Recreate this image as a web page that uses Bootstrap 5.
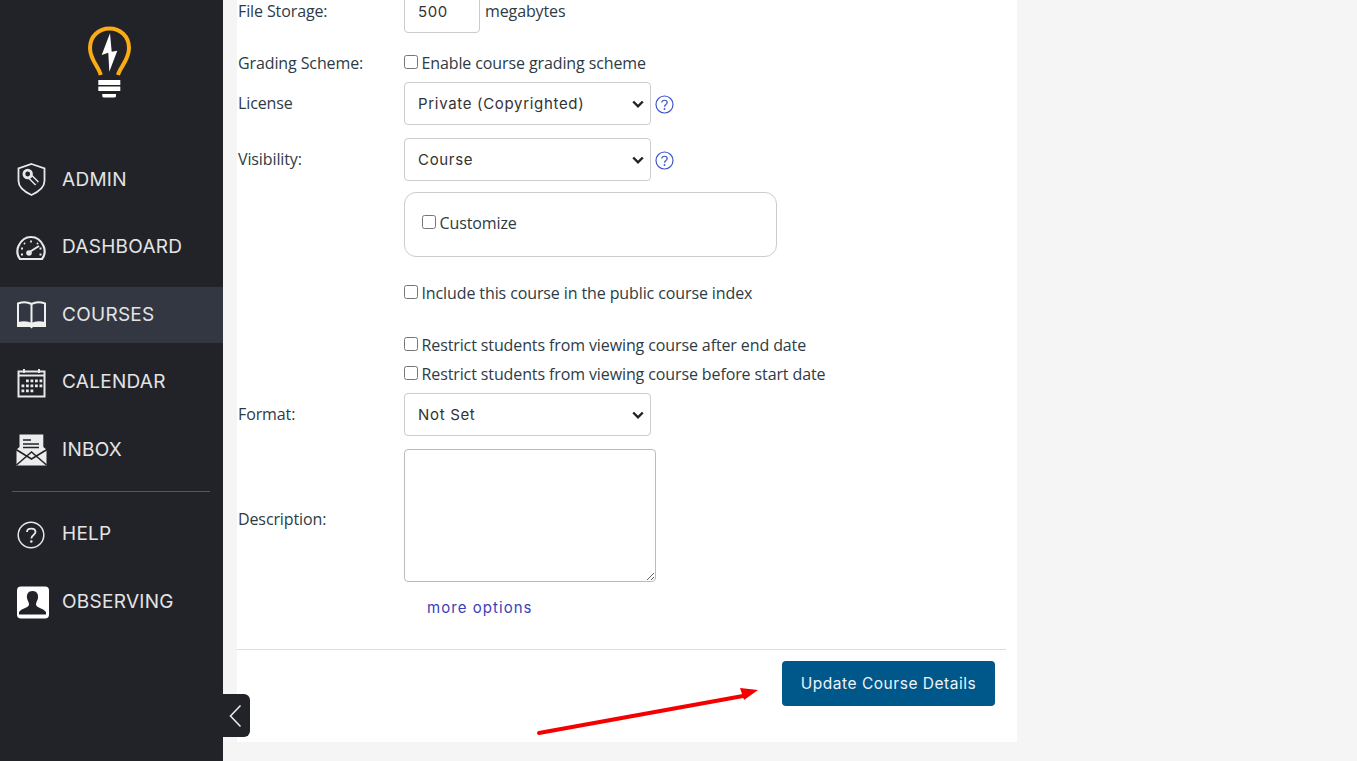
<!DOCTYPE html>
<html lang="en">
<head>
<meta charset="utf-8">
<title>Course details</title>
<link href="https://cdn.jsdelivr.net/npm/bootstrap@5.3.0/dist/css/bootstrap.min.css" rel="stylesheet">
<style>
html,body{height:100%;overflow:hidden}
body{background:#f5f5f5;font-family:"Open Sans","Liberation Sans",sans-serif;font-size:16px;letter-spacing:-.11px;color:#2d3b45}
.app-shell{height:761px}
.side-rail{width:223px;flex:none;background:#212329;padding-top:26px;position:relative}
.logo-wrap{height:126px;padding-right:3px}
.rail-item{height:56px;margin-bottom:11.5px;padding-left:16px;color:#e4e4e4;font-family:Inter,"Noto Sans",sans-serif;font-size:19px;letter-spacing:.28px;text-decoration:none}
.rail-item:hover{color:#fff}
.rail-item.is-current{background:#333741}
.rail-icon{width:46px;flex:none;display:block}
.rail-rule{margin:1px 13px 15px 12px;border-top:1px solid #55575c;opacity:1}
.rail-toggle{position:absolute;left:223px;top:694px;width:27px;height:43px;background:#212329;border-radius:0 6px 6px 0;z-index:3}
.form-panel{width:780px;height:742px;margin-left:14px;background:#fff;padding-right:11px;position:relative;overflow:hidden;flex:none}
.form-row{display:flex;padding-left:1px}
.form-lab{width:166px;flex:none;margin:0;font-size:16px;color:#2d3b45}
.lab-up{margin-top:-2px}
.lab-desc{padding-top:6px}
.num-box{width:76px;height:43px;border:1px solid #ccc;border-radius:4px;padding:0 13px;font-family:Inter,sans-serif;font-size:15px;letter-spacing:.6px;color:#333;background:#fff}
.unit-text{margin:-2px 0 0 5px}
.sel-box{width:247px;height:43px;border-color:#ccc;border-radius:4px;padding:1px 36px 0 13px;font-family:Inter,sans-serif;font-size:15px;letter-spacing:.68px;color:#333;background-image:url("data:image/svg+xml,%3csvg xmlns='http://www.w3.org/2000/svg' viewBox='0 0 12 10'%3e%3cpath fill='none' stroke='%23222' stroke-width='2.400' d='M1.200 2.500 6 7.300 10.800 2.500'/%3e%3c/svg%3e");background-size:12px 10px;background-position:right 6px center}
.chk{width:13.500px;height:13.500px;margin:-2px 4px 0 0;flex:none;appearance:none;background:#fff;border:1px solid #767676;border-radius:2.500px}
.chk-line{display:flex;align-items:center;margin:0;height:24px;color:#2d3b45}
.qmark{width:19px;height:19px;margin:2px 0 0 4px;flex:none}
.cust-box{width:373px;height:65px;border:1px solid #ccc;border-radius:12px;padding:18px 17px}
.desc-box{width:252px;height:133px;border:1px solid #bbb;border-radius:4px;display:block}
.more-link{margin-left:23px;font-family:Inter,sans-serif;font-size:15px;letter-spacing:1.05px;color:#3b3fb8;text-decoration:none}
.panel-rule{margin:29px 0 0;border-top:1px solid #ddd;opacity:1}
.save-btn{width:213px;height:45px;background:#00578a;border:0;border-radius:4px;color:#eef3f7;font-family:Inter,sans-serif;font-size:15.500px;letter-spacing:.53px;padding:2px 0 0}
.save-btn:hover{background:#00578a;color:#fff}
.note-arrow{position:absolute;left:0;top:0;width:780px;height:742px;pointer-events:none}
.gap-r1{margin-top:-10px}
.gap-r2{margin-top:18px}
.gap-r3{margin-top:7px}
.gap-r4{margin-top:13px}
.gap-r5{margin-top:11px}
.gap-r6{margin-top:24px}
.gap-r7{margin-top:28px}
.gap-r8{margin-top:5px}
.gap-r9{margin-top:7px}
.gap-r10{margin-top:13px}
.gap-r11{margin-top:15px}
.btn-row{margin-top:11px;padding-right:11px}
</style>
</head>
<body>
<div class="app-shell d-flex">
  <nav class="side-rail d-flex flex-column">
    <div class="logo-wrap d-flex justify-content-center">
      <svg width="46" height="73" viewBox="0 0 46 73" aria-label="logo">
        <path d="M13.700 49 C12 41 3 34 3 22 C3 10 12 2.500 22.500 2.500 C33 2.500 42 10 42 22 C42 34 33 41 31 49" fill="none" stroke="#fbab13" stroke-width="4"/>
        <path d="M23 7.300 L14.700 29 L21.300 26.700 L22.300 45.700 L30.300 24.700 L24.700 25.700 Z" fill="#fff"/>
        <rect x="11.300" y="54" width="22" height="5" fill="#fff"/>
        <rect x="11.300" y="60.500" width="22" height="4.500" fill="#fff"/>
        <path d="M15.300 68 H29 V70 Q29 71.500 27 71.500 H17 Q15.300 71.500 15.300 70 Z" fill="#fff"/>
      </svg>
    </div>
    <a class="rail-item d-flex align-items-center" href="#">
      <svg class="rail-icon" height="34" viewBox="0 0 46 34"><path d="M15.500 1 L28.500 5.500 V18 C28.500 24 22 29 15.500 32 C9 29 2.500 24 2.500 18 V5.500 Z" fill="none" stroke="#e8e8e8" stroke-width="1.800"/><path d="M14.500 14 L21 20.500" stroke="#e8e8e8" stroke-width="5.500"/><path d="M14.500 14 L21 20.500" stroke="#212329" stroke-width="2.500"/><circle cx="11.700" cy="11" r="5.200" fill="#e8e8e8"/><circle cx="11.700" cy="11" r="2.400" fill="#212329"/></svg>
      <span>ADMIN</span>
    </a>
    <a class="rail-item d-flex align-items-center" href="#">
      <svg class="rail-icon" height="26" viewBox="0 0 46 26"><path d="M4 24 C0.500 20 1 14 2.500 11 C5 5.500 9.500 2 15 2 C20.500 2 25 5.500 27.500 11 C29 14 29.500 20 26 24 Z" fill="none" stroke="#e8e8e8" stroke-width="2.200"/><path d="M12 18 L23 11" stroke="#e8e8e8" stroke-width="2"/><circle cx="13" cy="18" r="2.800" fill="#e8e8e8"/><path d="M15 5.500v2M8 8l1 1M22 8l-1 1M5 13.500h2M23.500 13.500h2M5 19.500h2M23.500 19.500h2" stroke="#e8e8e8" stroke-width="1.800"/></svg>
      <span>DASHBOARD</span>
    </a>
    <a class="rail-item is-current d-flex align-items-center" href="#">
      <svg class="rail-icon" height="28" viewBox="0 0 46 28"><path d="M2 2.500 C7 0.800 12 1.200 15.500 3 C19 1.200 24 0.800 29 2.500 V22 C24 21 19 21 15.500 23 C12 21 7 21 2 22 Z M15.500 3 V23" fill="none" stroke="#f0f0f0" stroke-width="2"/><path d="M1 22 H30 V26 H17 L15.500 27.500 L14 26 H1 Z" fill="#f0f0f0"/></svg>
      <span>COURSES</span>
    </a>
    <a class="rail-item d-flex align-items-center" href="#">
      <svg class="rail-icon" height="30" viewBox="0 0 46 30"><path d="M2.500 3.500 H28.500 V28.500 H2.500 Z" fill="none" stroke="#e8e8e8" stroke-width="2"/><path d="M2 7.500 H29" stroke="#e8e8e8" stroke-width="2"/><path d="M8 1v4M23 1v4" stroke="#e8e8e8" stroke-width="2"/><path d="M10 11.500h2.800v2.800h-2.800zM14.500 11.500h2.800v2.800h-2.800zM19 11.500h2.800v2.800h-2.800zM23.500 11.500h2.800v2.800h-2.800zM5.500 16.500h2.800v2.800h-2.800zM10 16.500h2.800v2.800h-2.800zM14.500 16.500h2.800v2.800h-2.800zM19 16.500h2.800v2.800h-2.800zM23.500 16.500h2.800v2.800h-2.800zM5.500 21.500h2.800v2.800h-2.800zM10 21.500h2.800v2.800h-2.800zM14.500 21.500h2.800v2.800h-2.800z" fill="#e8e8e8"/></svg>
      <span>CALENDAR</span>
    </a>
    <a class="rail-item d-flex align-items-center" href="#">
      <svg class="rail-icon" height="32" viewBox="0 0 46 32"><path d="M3.500 0.500 H27.300 V13 L30.500 15.500 V31.500 H0.500 V15.500 L3.500 13 Z" fill="#ececec"/><path d="M7 6h8M7 10h16M7 13.500h16" stroke="#212329" stroke-width="1.500"/><path d="M0 15.500 L15.500 25 L31 15.500 M0.500 31 L15.500 18 L30.500 31" fill="none" stroke="#212329" stroke-width="1.500"/></svg>
      <span>INBOX</span>
    </a>
    <hr class="rail-rule">
    <a class="rail-item d-flex align-items-center" href="#">
      <svg class="rail-icon" height="28" viewBox="0 0 46 28"><circle cx="15" cy="14" r="12.800" fill="none" stroke="#e8e8e8" stroke-width="1.500"/><path d="M11 11 C11 6.500 19.500 6.500 19.500 11 C19.500 14 15.300 14 15.300 17.500" fill="none" stroke="#e8e8e8" stroke-width="1.800"/><circle cx="15.300" cy="20.500" r="1.300" fill="#e8e8e8"/></svg>
      <span>HELP</span>
    </a>
    <a class="rail-item d-flex align-items-center" href="#">
      <svg class="rail-icon" height="33" viewBox="0 0 46 33"><rect x="1" y="0.500" width="32" height="32" rx="4" fill="#fff"/><path d="M16.500 5 C21 5 22.500 8.500 22 12 C21.700 14.500 20 16 20 18.500 C20 21.500 27 22 30 26 V28.500 H3 V26 C6 22 13 21.500 13 18.500 C13 16 11.300 14.500 11 12 C10.500 8.500 12 5 16.500 5 Z" fill="#212329"/></svg>
      <span>OBSERVING</span>
    </a>
    <div class="rail-toggle d-flex align-items-center justify-content-center">
      <svg width="16" height="24" viewBox="0 0 16 24"><path d="M11.500 1.500 L1.500 12 L11.500 22.500" fill="none" stroke="#e8e8e8" stroke-width="1.600"/></svg>
    </div>
  </nav>
  <main class="form-panel">
    <div class="form-row align-items-center gap-r1">
      <label class="form-lab lab-up" for="fs">File Storage:</label>
      <input id="fs" class="num-box" value="500">
      <span class="unit-text">megabytes</span>
    </div>
    <div class="form-row align-items-center gap-r2">
      <span class="form-lab">Grading Scheme:</span>
      <label class="chk-line"><input class="chk" type="checkbox">Enable course grading scheme</label>
    </div>
    <div class="form-row align-items-center gap-r3">
      <label class="form-lab lab-up" for="li">License</label>
      <select id="li" class="form-select sel-box"><option>Private (Copyrighted)</option></select>
      <svg class="qmark" viewBox="0 0 19 19"><circle cx="9.500" cy="9.500" r="8.500" fill="none" stroke="#3f55c8" stroke-width="1.200"/><path d="M6.800 7.500 C6.800 4.500 12.200 4.500 12.200 7.500 C12.200 9.500 9.500 9.500 9.500 11.800" fill="none" stroke="#3f55c8" stroke-width="1.200"/><circle cx="9.500" cy="14" r=".9" fill="#3f55c8"/></svg>
    </div>
    <div class="form-row align-items-center gap-r4">
      <label class="form-lab lab-up" for="vi">Visibility:</label>
      <select id="vi" class="form-select sel-box"><option>Course</option></select>
      <svg class="qmark" viewBox="0 0 19 19"><circle cx="9.500" cy="9.500" r="8.500" fill="none" stroke="#3f55c8" stroke-width="1.200"/><path d="M6.800 7.500 C6.800 4.500 12.200 4.500 12.200 7.500 C12.200 9.500 9.500 9.500 9.500 11.800" fill="none" stroke="#3f55c8" stroke-width="1.200"/><circle cx="9.500" cy="14" r=".9" fill="#3f55c8"/></svg>
    </div>
    <div class="form-row gap-r5">
      <span class="form-lab"></span>
      <div class="cust-box"><label class="chk-line"><input class="chk" type="checkbox">Customize</label></div>
    </div>
    <div class="form-row gap-r6">
      <span class="form-lab"></span>
      <label class="chk-line"><input class="chk" type="checkbox">Include this course in the public course index</label>
    </div>
    <div class="form-row gap-r7">
      <span class="form-lab"></span>
      <label class="chk-line"><input class="chk" type="checkbox">Restrict students from viewing course after end date</label>
    </div>
    <div class="form-row gap-r8">
      <span class="form-lab"></span>
      <label class="chk-line"><input class="chk" type="checkbox">Restrict students from viewing course before start date</label>
    </div>
    <div class="form-row align-items-center gap-r9">
      <label class="form-lab lab-up" for="fo">Format:</label>
      <select id="fo" class="form-select sel-box"><option>Not Set</option></select>
    </div>
    <div class="form-row align-items-center gap-r10">
      <label class="form-lab lab-desc" for="de">Description:</label>
      <textarea id="de" class="desc-box"></textarea>
    </div>
    <div class="form-row gap-r11">
      <span class="form-lab"></span>
      <a class="more-link" href="#">more options</a>
    </div>
    <hr class="panel-rule">
    <div class="d-flex justify-content-end btn-row">
      <button class="save-btn" type="button">Update Course Details</button>
    </div>
    <svg class="note-arrow" viewBox="0 0 780 742"><path d="M302 733 L506 696" stroke="#f50000" stroke-width="4" stroke-linecap="round"/><path d="M521 690 L503 688 L507 700 Z" fill="#f50000"/></svg>
  </main>
</div>
</body>
</html>
